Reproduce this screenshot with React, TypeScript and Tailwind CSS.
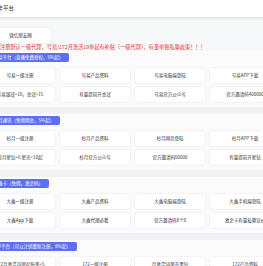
const font = { fontFamily: '"Noto Sans CJK SC", "Noto Sans", sans-serif' }

type Section = { title: string; items: string[] }

const sections: Section[] = [
  {
    title: '号易平台（直播免费授权，6%起）',
    items: ['号易一级注册', '号易产品资料', '号易电脑端登陆', '号易APP下载', '号易银冠+10，金冠+15', '有量提前开金冠', '号易官方公众号', '官方邀请码400000'],
  },
  {
    title: '杉月通讯（免佣佣金，5%起）',
    items: ['杉月一级注册', '杉月产品资料', '杉月网页登陆', '杉月APP下载', '杉月星钻+6 星光+10起', '杉月官方公众号', '官方邀请码00000', '有量提前开星钻'],
  },
  {
    title: '大鑫卡（免佣，激企码）',
    items: ['大鑫一级注册', '大鑫产品资料', '大鑫电脑端登陆', '大鑫手机端登陆', '大鑫App下载', '大鑫代理必看', '官方邀请码8个8', '激企卡有量私聊议价'],
  },
  {
    title: '172平台（可以注销重新注册，8%起）',
    items: ['172月激活10单起每单+5', '172一级注册', '月激活50单升黑钻', '172产品资料', '172电脑端登陆', '172APP下载', '172官方公众号', '官方邀请码172'],
  },
]

const Card = ({ text }: { text: string }) => (
  <div className="h-[15px] bg-white rounded-[2px] shadow-[0_0_2px_rgba(0,0,0,0.12)] flex items-center justify-center text-[4.5px] leading-none text-[#333] whitespace-nowrap overflow-hidden">
    {text}
  </div>
)

const Panel = ({ section }: { section: Section }) => (
  <div className="bg-[#fbfbfc] pt-[2px] pb-[5px] mb-[7px]">
    <div className="ml-[2.5px] flex w-fit h-[9px] items-center px-[6px] rounded-[2px] bg-[#5d6ff2] text-white text-[4.5px] leading-none whitespace-nowrap">
      {section.title}
    </div>
    <div className="mt-[6px] grid grid-cols-[repeat(4,70px)] gap-x-[5px] gap-y-[4px]">
      {section.items.map((item) => (
        <Card key={item} text={item} />
      ))}
    </div>
  </div>
)

export default function App() {
  return (
    <div className="w-[263px] h-[266px] overflow-hidden bg-[#f0f2f5] text-[5px] leading-none" style={font}>
      <div className="h-[17px] bg-white shadow-[0_1px_2px_rgba(0,0,0,0.08)] flex items-center">
        <div className="ml-[-8px] text-[5.5px] text-[#333] whitespace-nowrap">号卡平台</div>
      </div>
      <div className="ml-[-15px] w-[310px]">
        <div className="mt-[3px] bg-[#f7f8fa] pt-[8px] pb-[1px]">
          <div className="ml-[5px] w-[61px] h-[15px] bg-white rounded-[2px] shadow-[0_0_2px_rgba(0,0,0,0.12)] flex items-center justify-center text-[4.5px] text-[#333]">
            微信朋友圈
          </div>
          <div className="ml-[15px] h-[7px] leading-[7px] text-[5.2px] text-[#e53935] whitespace-nowrap">
            注册默认一级代理，号易/172月激活10单起有补贴（一级代理），有量单独私聊政策！！！
          </div>
        </div>
        {sections.map((s) => (
          <Panel key={s.title} section={s} />
        ))}
      </div>
    </div>
  )
}
